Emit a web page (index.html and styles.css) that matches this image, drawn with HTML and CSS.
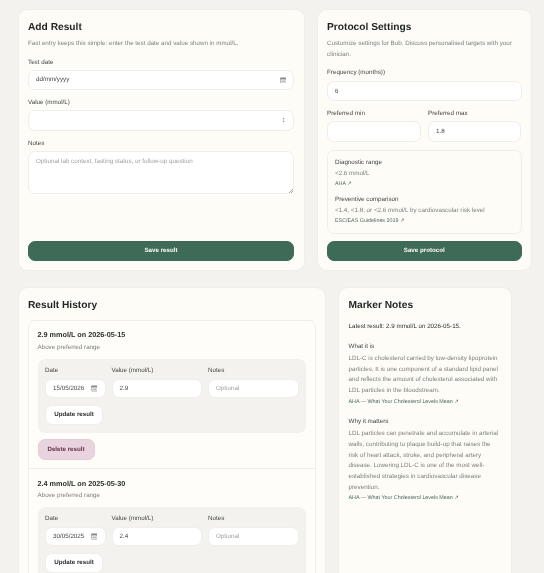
FILE: index.html
```html
<!DOCTYPE html>
<html lang="en">
<head>
    <meta charset="UTF-8">
    <meta name="viewport" content="width=device-width, initial-scale=1.0">
    <title>LDL-C Tracker</title>
    <link rel="stylesheet" href="styles.css">
</head>
<body>
    <div class="page">
        <div class="row row-top">
            <section class="card card-fill">
                <h2>Add Result</h2>
                <p class="sub">Fast entry keeps this simple: enter the test date and value shown in mmol/L.</p>
                <label>Test date</label>
                <div class="input">
                    <span class="input-text">dd/mm/yyyy</span>
                    <svg class="icon" viewBox="0 0 8 8"><rect x="0.5" y="1" width="7" height="6.5" rx="0.8" fill="none" stroke="#888" stroke-width="0.8"/><rect x="0.5" y="1" width="7" height="2" fill="#888"/><rect x="1.8" y="4.2" width="4.4" height="2" fill="#bbb"/></svg>
                </div>
                <label>Value (mmol/L)</label>
                <div class="input">
                    <span class="input-text"></span>
                    <svg class="spin" viewBox="0 0 5 10"><path d="M2.5 1 L4.2 3.6 H0.8 Z M2.5 9 L4.2 6.4 H0.8 Z" fill="#888"/></svg>
                </div>
                <label>Notes</label>
                <textarea class="notes" placeholder="Optional lab context, fasting status, or follow-up question"></textarea>
                <button class="btn-primary">Save result</button>
            </section>
            <section class="card card-fill">
                <h2>Protocol Settings</h2>
                <p class="sub">Customize settings for Bob. Discuss personalised targets with your clinician.</p>
                <label class="first-label">Frequency (months))</label>
                <div class="input"><span class="input-text">6</span></div>
                <div class="pair">
                    <div>
                        <label>Preferred min</label>
                        <div class="input"><span class="input-text"></span></div>
                    </div>
                    <div>
                        <label>Preferred max</label>
                        <div class="input"><span class="input-text">1.8</span></div>
                    </div>
                </div>
                <div class="ranges">
                    <h4>Diagnostic range</h4>
                    <p>&lt;2.6 mmol/L</p>
                    <a>AHA ↗</a>
                    <h4 class="next">Preventive comparison</h4>
                    <p>&lt;1.4, &lt;1.8, or &lt;2.6 mmol/L by cardiovascular risk level</p>
                    <a>ESC/EAS Guidelines 2019 ↗</a>
                </div>
                <button class="btn-primary">Save protocol</button>
            </section>
        </div>
        <div class="row row-bottom">
            <section class="card">
                <h2>Result History</h2>
                <div class="history">
                    <div class="item">
                        <h3>2.9 mmol/L on 2026-05-15</h3>
                        <p class="status">Above preferred range</p>
                        <div class="edit">
                            <div class="edit-grid">
                                <div>
                                    <label>Date</label>
                                    <div class="input small date"><span class="input-text">15/05/2026</span><svg class="icon" viewBox="0 0 8 8"><rect x="0.5" y="1" width="7" height="6.5" rx="0.8" fill="none" stroke="#888" stroke-width="0.8"/><rect x="0.5" y="1" width="7" height="2" fill="#888"/><rect x="1.8" y="4.2" width="4.4" height="2" fill="#bbb"/></svg></div>
                                </div>
                                <div>
                                    <label>Value (mmol/L)</label>
                                    <div class="input small"><span class="input-text">2.9</span></div>
                                </div>
                                <div>
                                    <label>Notes</label>
                                    <div class="input small"><span class="input-text placeholder">Optional</span></div>
                                </div>
                            </div>
                            <button class="btn-white">Update result</button>
                        </div>
                        <button class="btn-delete">Delete result</button>
                    </div>
                    <div class="item">
                        <h3>2.4 mmol/L on 2025-05-30</h3>
                        <p class="status">Above preferred range</p>
                        <div class="edit">
                            <div class="edit-grid">
                                <div>
                                    <label>Date</label>
                                    <div class="input small date"><span class="input-text">30/05/2025</span><svg class="icon" viewBox="0 0 8 8"><rect x="0.5" y="1" width="7" height="6.5" rx="0.8" fill="none" stroke="#888" stroke-width="0.8"/><rect x="0.5" y="1" width="7" height="2" fill="#888"/><rect x="1.8" y="4.2" width="4.4" height="2" fill="#bbb"/></svg></div>
                                </div>
                                <div>
                                    <label>Value (mmol/L)</label>
                                    <div class="input small"><span class="input-text">2.4</span></div>
                                </div>
                                <div>
                                    <label>Notes</label>
                                    <div class="input small"><span class="input-text placeholder">Optional</span></div>
                                </div>
                            </div>
                            <button class="btn-white">Update result</button>
                        </div>
                        <button class="btn-delete">Delete result</button>
                    </div>
                </div>
            </section>
            <section class="card marker">
                <h2>Marker Notes</h2>
                <p class="latest">Latest result: 2.9 mmol/L on 2026-05-15.</p>
                <h4>What it is</h4>
                <p>LDL-C is cholesterol carried by low-density lipoprotein particles. It is one component of a standard lipid panel and reflects the amount of cholesterol associated with LDL particles in the bloodstream.</p>
                <a>AHA — What Your Cholesterol Levels Mean ↗</a>
                <h4 class="next">Why it matters</h4>
                <p>LDL particles can penetrate and accumulate in arterial walls, contributing to plaque build-up that raises the risk of heart attack, stroke, and peripheral artery disease. Lowering LDL-C is one of the most well-established strategies in cardiovascular disease prevention.</p>
                <a>AHA — What Your Cholesterol Levels Mean ↗</a>
            </section>
        </div>
    </div>
</body>
</html>
```

FILE: styles.css
```css
html, body {
    height: 100%;
    overflow: hidden;
}
body {
    margin: 0;
    background-color: #f3f2ee;
    color: #1f2421;
    font-family: "Liberation Sans", Arial, sans-serif;
    font-size: 6.25px;
    text-rendering: geometricPrecision;
}
.page {
    padding: 9px 12px 0 17.5px;
    will-change: transform;
    filter: blur(0.3px);
}
.row {
    display: grid;
    column-gap: 12px;
}
.row-top {
    grid-template-columns: 287px 215.5px;
    height: 262px;
    margin-bottom: 16px;
}
.row-bottom {
    grid-template-columns: 308.5px 174px;
    height: 600px;
}
.card {
    background: #fdfcf7;
    border: 1px solid #efeee8;
    border-radius: 10px;
    padding: 9.5px;
    box-sizing: border-box;
}
.card-fill {
    display: flex;
    flex-direction: column;
}
h2 {
    margin: 0;
    font-size: 10.2px;
    line-height: 15px;
    font-weight: bold;
}
.sub {
    margin: 4.5px 0 0;
    color: #7d807b;
    line-height: 10.7px;
}
label {
    display: block;
    margin: 8px 0 3px;
    line-height: 9px;
    color: #3f433f;
}
.first-label {
    margin-bottom: 3.5px;
}
.input {
    height: 20.5px;
    background: #fff;
    border: 1px solid #efeee8;
    border-radius: 7px;
    box-sizing: border-box;
    padding: 0 7px;
    display: flex;
    align-items: center;
    justify-content: space-between;
    color: #3f433f;
}
.icon {
    width: 6.5px;
    height: 6.5px;
}
.spin {
    width: 3px;
    height: 8px;
    margin-right: 1.5px;
}
.notes {
    display: block;
    width: 100%;
    height: 43px;
    box-sizing: border-box;
    padding: 5px 7px;
    border: 1px solid #efeee8;
    border-radius: 7px;
    background: #fff;
    font-family: inherit;
    font-size: 6.25px;
    line-height: 9px;
    outline: none;
    text-rendering: geometricPrecision;
}
.notes::placeholder, .placeholder {
    color: #a0a29e;
}
.notes::-webkit-resizer {
    background: linear-gradient(135deg, transparent 50%, #aaa 50%, #aaa 62%, transparent 62%, transparent 76%, #aaa 76%, #aaa 88%, transparent 88%) right bottom / 5px 5px no-repeat;
}
button {
    font-family: inherit;
    font-size: 6.2px;
    font-weight: bold;
    border: 1px solid #efeee8;
    border-radius: 7px;
    cursor: pointer;
    padding: 0;
    text-rendering: geometricPrecision;
}
.btn-primary {
    margin-top: auto;
    height: 20px;
    background: #3e6b57;
    border-color: #3e6b57;
    color: #fdfcf7;
    flex-shrink: 0;
}
.pair {
    display: grid;
    grid-template-columns: 94px 93px;
    column-gap: 7px;
}
.ranges {
    margin-top: 8px;
    padding: 7px 7px 5px;
    height: 84px;
    box-sizing: border-box;
    border: 1px solid #efeee8;
    border-radius: 7px;
    background: #fdfcf7;
}
h4 {
    margin: 0;
    font-weight: normal;
    font-size: 6.25px;
    line-height: 10.7px;
    color: #3f433f;
}
.ranges p, .marker p {
    margin: 0;
    color: #7d807b;
    line-height: 10.7px;
}
a {
    display: block;
    font-size: 5.36px;
    line-height: 10.7px;
    color: #4b6b5c;
}
.next {
    margin-top: 5px;
}
.history {
    margin-top: 7.8px;
    border: 1px solid #efeee8;
    border-radius: 7px;
    background: #fefdf9;
}
.item {
    padding: 9.2px 8.5px 8.3px;
    border-bottom: 1px solid #efeee8;
}
h3 {
    margin: 0;
    font-size: 7.25px;
    line-height: 10px;
    font-weight: bold;
    color: #2b2f2c;
}
.status {
    margin: 2.5px 0 0;
    color: #7d807b;
    line-height: 10px;
}
.edit {
    margin-top: 5.7px;
    background: #f3f2ee;
    border-radius: 7px;
    padding: 7.5px 7.5px 8px;
}
.edit-grid {
    display: grid;
    grid-template-columns: 60.5px 90.5px 90.5px;
    column-gap: 6px;
}
.edit-grid label {
    margin: 0 0 3.5px;
}
.small {
    height: 19.5px;
}
.date {
    padding-right: 7.5px;
}
.btn-white {
    display: block;
    margin-top: 6.5px;
    width: 58px;
    height: 20px;
    background: #fff;
    color: #2b2f2c;
}
.btn-delete {
    display: block;
    margin-top: 6.5px;
    width: 57px;
    height: 21px;
    background: #e8d3de;
    border-color: #e2cdd8;
    color: #6b2f4a;
}
.marker h2 {
    margin-bottom: 9px;
}
.latest {
    color: #2b2f2c !important;
    margin-bottom: 9.3px !important;
}
.marker h4 {
    margin-bottom: 1.6px;
}
.marker .next {
    margin-top: 9.5px;
}
```
